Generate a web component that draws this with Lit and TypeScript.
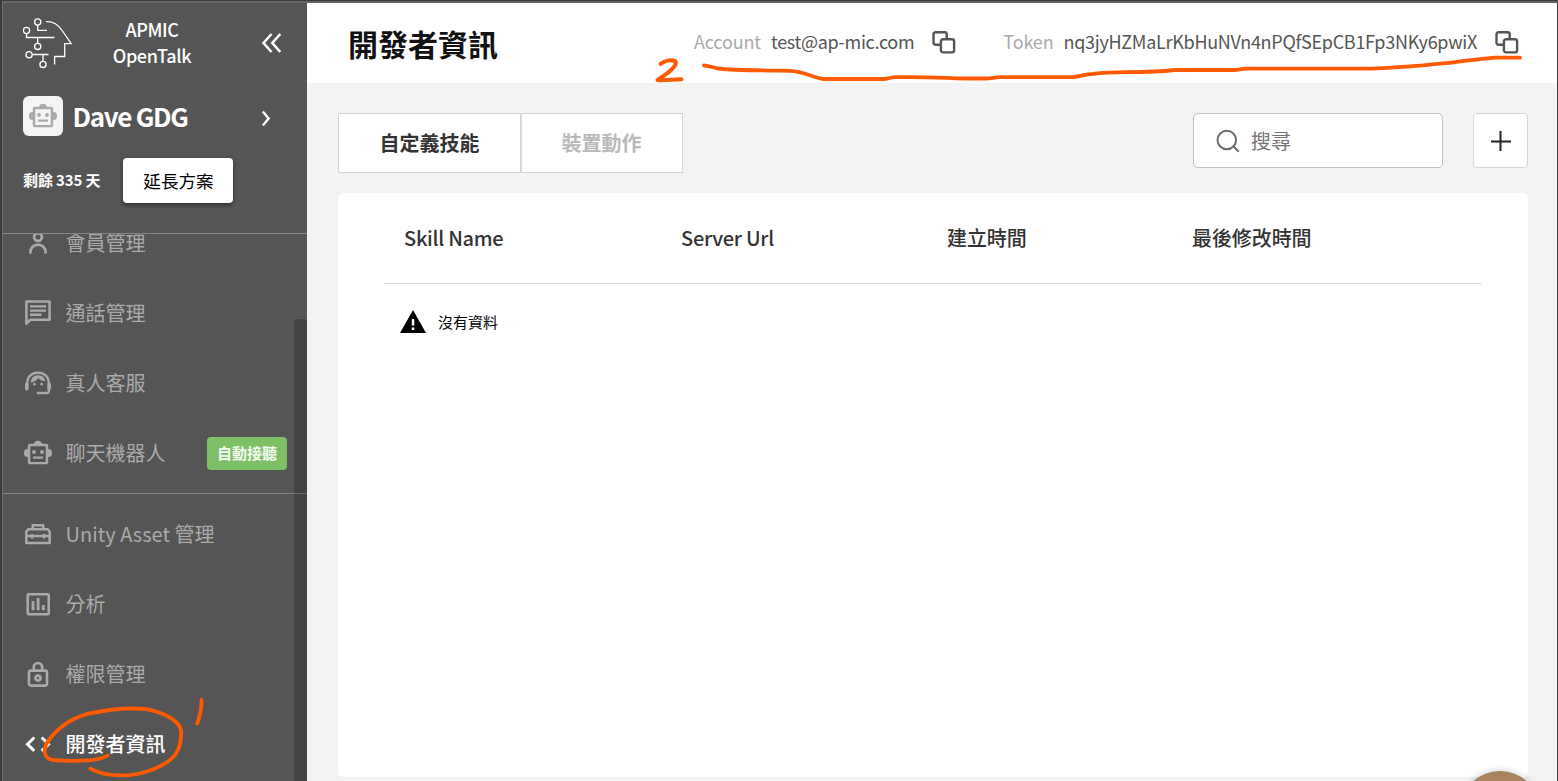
import { LitElement, html, css, svg } from "lit";
import { customElement, property } from "lit/decorators.js";

const robot = svg`<path fill-rule="evenodd" d="M14 .7a4 4 0 0 1 4 3h4.200a2 2 0 0 1 2 2v3.400a4 4 0 0 1 0 8v5.200a2 2 0 0 1-2 2H5.800a2 2 0 0 1-2-2v-5.200a4 4 0 0 1 0-8V5.700a2 2 0 0 1 2-2H10a4 4 0 0 1 4-3zM6.300 6.200v15.700h15.400V6.200z"/><circle cx="10" cy="12" r="1.900"/><circle cx="18" cy="12" r="1.900"/><path d="M9 16.500h10v2.200H9z"/>`;

const icons: Record<string, unknown> = {
  member: svg`<g fill="none" stroke="currentColor" stroke-width="2.700" stroke-linecap="round"><circle cx="14" cy="7" r="3.900"/><path d="M6.400 22.600v-.4a7.600 7.600 0 0 1 15.200 0v.4"/></g>`,
  chat: svg`<path fill="none" stroke="currentColor" stroke-width="2.500" stroke-linejoin="round" d="M2.400 1.500h23.200v18.200H6.400l-4 4z"/><path d="M6 5.200h16v2.300H6zM6 9.400h16v2.300H6zM6 13.600h11.500v2.300H6z"/>`,
  agent: svg`<path fill="none" stroke="currentColor" stroke-width="2.300" stroke-linecap="round" d="M3.200 13.500C3.200 6.500 8 2.600 14 2.600s10.800 3.900 10.800 10.900v7.500a2 2 0 0 1-2 2h-9"/><rect x="1" y="12.500" width="3.600" height="8" rx="1.700"/><rect x="23.400" y="12.500" width="3.600" height="8" rx="1.700"/><path d="M6.700 12.600C7 8 9.800 5.300 14 5.300c3.900 0 6.800 2.300 7.400 5.800-3 0-5.700-1-7.200-3.100-1.500 2.500-4.200 4.200-7.500 4.600z"/><circle cx="10.400" cy="14.200" r="1.400"/><circle cx="17.700" cy="14.200" r="1.400"/>`,
  robot,
  toolbox: svg`<g fill="none" stroke="currentColor" stroke-width="2.500" stroke-linejoin="round"><path d="M2.300 15v7h23.400v-7M2.300 15v-4.500l2.200-2.300h19l2.200 2.300V15z"/><path d="M8.700 8V4.200h10.600V8M8 13v4.500M20 13v4.500"/></g>`,
  chart: svg`<rect x="3.700" y="3.200" width="21" height="20" rx="1" fill="none" stroke="currentColor" stroke-width="2.500"/><path d="M7.600 10h2.800v9.200H7.600zM12.700 7h2.800v12.200h-2.800zM17.900 14h2.800v5.200h-2.800z"/>`,
  lock: svg`<g fill="none" stroke="currentColor" stroke-width="2.600"><rect x="5" y="9.600" width="18" height="15" rx="2"/><path d="M9.800 9.500V6.200a4.200 4.200 0 0 1 8.400 0v3.300"/><circle cx="14" cy="17.100" r="2.500"/></g>`,
  code: svg`<path fill="none" stroke="currentColor" stroke-width="3" d="M10.300 6.500L3.500 13.200l6.800 6.700M17.700 6.500l6.800 6.700-6.800 6.700"/>`,
};

const copyIcon = html`<svg class="copy" width="26" height="26" viewBox="0 0 26 26" fill="none" stroke="#555" stroke-width="2.400"><path d="M9.200 14.800H4.500a2 2 0 0 1-2-2V4.300a2 2 0 0 1 2-2h9.200a2 2 0 0 1 2 2v4.200"/><rect x="9.900" y="9.200" width="13.200" height="13.200" rx="2.200"/></svg>`;

@customElement("nav-item")
class NavItem extends LitElement {
  @property() icon = "";
  @property() label = "";
  @property() badge = "";
  @property({ type: Boolean, reflect: true }) active = false;
  static styles = css`
    :host { display: flex; align-items: center; height: 70px; flex: none; padding: 0 20px 0 21px; color: #aaa; font-size: 20px; line-height: 30px; box-sizing: border-box; }
    :host([active]) { color: #fff; font-weight: 500; }
    svg { width: 28px; height: 28px; fill: currentColor; margin: 2px 13.600px 0 0; flex: none; }
    .label { flex: 1; white-space: nowrap; }
    .badge { width: 80px; height: 33px; line-height: 32px; border-radius: 4px; background: #7dc066; color: #f4fbf1; text-align: center; font-size: 15px; font-weight: 700; }
  `;
  render() {
    return html`<svg viewBox="0 0 28 28">${icons[this.icon]}</svg><span class="label">${this.label}</span>${this.badge ? html`<span class="badge">${this.badge}</span>` : ""}`;
  }
}

@customElement("side-bar")
class SideBar extends LitElement {
  static styles = css`
    :host { display: flex; flex-direction: column; width: 304px; flex: none; background: #555; color: #fff; overflow: hidden; }
    .head { height: 231px; flex: none; box-sizing: border-box; border-bottom: 1px solid #858585; padding: 13px 20px 0; }
    .brand { display: flex; height: 54px; align-items: center; }
    .brand .name { flex: 1; text-align: center; font-size: 18px; font-weight: 500; line-height: 26px; letter-spacing: -0.350px; padding: 0 30px 2px 0; }
    .brand .fold { margin-right: 4px; }
    .logo { flex: none; }
    .bot { display: flex; align-items: center; margin-top: 26px; height: 40px; }
    .avatar { display: flex; align-items: center; justify-content: center; width: 40px; height: 40px; border-radius: 6px; background: #f4f4f4; }
    .avatar svg { fill: #aaa; margin-top: 1px; }
    .bot .name { flex: 1; margin-left: 9.500px; font-size: 26px; font-weight: 700; line-height: 40px; letter-spacing: -1.300px; }
    .plan { display: flex; align-items: center; margin-top: 22px; height: 45px; font-size: 15px; font-weight: 700; }
    .days { width: 77px; letter-spacing: -0.120px; white-space: nowrap; margin-top: -2px; }
    .extend { margin-left: 23px; width: 110px; height: 45px; border-radius: 4px; border: 0; padding: 0 0 0 1px; background: #fff; color: #000; font: inherit; font-weight: 400; font-size: 17.600px; box-shadow: 0 2px 4px rgba(0,0,0,.45); }
    .menu { position: relative; flex: 1; min-height: 0; overflow: hidden; }
    .list { display: flex; flex-direction: column; margin-top: -26px; }
    .line { height: 1px; background: #858585; margin: 5px 0; flex: none; }
    .thumb { position: absolute; right: 0; top: 85px; bottom: 0; width: 13px; background: #444; border-radius: 3px 3px 0 0; }
    .thumbline { position: absolute; right: 0; top: 259px; width: 13px; height: 1px; background: #6c6c6c; }
  `;
  render() {
    return html`
      <div class="head">
        <div class="brand">
          <svg class="logo" width="50" height="52" viewBox="23 17 50 52" fill="none" stroke="#fff" stroke-width="1.300">
            <circle cx="37.700" cy="22" r="3.100"/><circle cx="26.500" cy="30.500" r="3.100"/><circle cx="37.700" cy="46.400" r="3.100"/><circle cx="29.100" cy="54.700" r="3.100"/><circle cx="43" cy="64.400" r="3.100"/>
            <path d="M37.700 25v5.400H47M26.500 33.600v3.900h28M37.700 37.500v5.800M32.200 54.500h16.300M43 54.500v6.800M46 21.600c7.500-.5 12.500 3 16.500 9.400l8.700 12.700h-6.500v12.800H54.600v8"/>
          </svg>
          <div class="name">APMIC<br>OpenTalk</div>
          <svg class="fold" width="22" height="22" viewBox="0 0 22 22" fill="none" stroke="#fff" stroke-width="2.600"><path d="M10.500 2L2.500 11l8 9M19.300 2l-8 9 8 9"/></svg>
        </div>
        <div class="bot">
          <div class="avatar"><svg width="28" height="28" viewBox="0 0 28 28">${robot}</svg></div>
          <div class="name">Dave GDG</div>
          <svg width="26" height="20" viewBox="0 0 26 20" fill="none" stroke="#fff" stroke-width="2.400"><path d="M1.800 5.500l5.800 7-5.800 7"/></svg>
        </div>
        <div class="plan"><span class="days">剩餘 335 天</span><button class="extend">延長方案</button></div>
      </div>
      <div class="menu">
        <div class="list">
          <nav-item icon="member" label="會員管理"></nav-item>
          <nav-item icon="chat" label="通話管理"></nav-item>
          <nav-item icon="agent" label="真人客服"></nav-item>
          <nav-item icon="robot" label="聊天機器人" badge="自動接聽"></nav-item>
          <div class="line"></div>
          <nav-item icon="toolbox" label="Unity Asset 管理"></nav-item>
          <nav-item icon="chart" label="分析"></nav-item>
          <nav-item icon="lock" label="權限管理"></nav-item>
          <nav-item icon="code" label="開發者資訊" active></nav-item>
        </div>
        <div class="thumb"></div><div class="thumbline"></div>
      </div>`;
  }
}

@customElement("app-root")
class AppRoot extends LitElement {
  static styles = css`
    :host { position: relative; display: flex; width: 1558px; height: 781px; box-sizing: border-box; overflow: hidden; border-top: 1px solid #3b3b3b; border-left: 2px solid #3b3b3b; border-right: 1px solid #444; font-family: "Noto Sans CJK TC", "Noto Sans CJK SC", sans-serif; }
    .window { display: flex; flex: 1; border-top: 2px solid #666; border-left: 1px solid #6e6e6e; min-width: 0; }
    main { flex: 1; min-width: 0; display: flex; flex-direction: column; background: #f3f3f3; }
    header { height: 80px; flex: none; background: #fff; display: flex; align-items: center; padding: 0 37px 0 41px; box-sizing: border-box; }
    h1 { margin: 0; flex: 1; font-size: 30px; font-weight: 700; line-height: 44px; color: #111; padding-bottom: 1px; }
    .info { display: flex; align-items: center; font-size: 18px; line-height: 26px; color: #555; white-space: nowrap; }
    .info span { padding-bottom: 4px; }
    .info .key { color: #aaa; margin-right: 10px; letter-spacing: -0.150px; }
    .info .value { letter-spacing: -0.290px; }
    .info .mail { letter-spacing: -0.300px; }
    .info .copy { margin-left: 17px; flex: none; }
    .info + .info { margin-left: 46px; }
    .tools { display: flex; height: 60px; margin: 30px 29px 0 31px; flex: none; }
    .tab { box-sizing: border-box; height: 60px; border: 1px solid #d5d5d5; background: #fff; text-align: center; font-size: 20px; font-weight: 700; line-height: 58px; color: #333; width: 183px; }
    .tab.off { width: 162px; color: #b9b9b9; border-left-color: #ddd; padding-right: 1px; }
    .space { flex: 1; }
    .search { box-sizing: border-box; width: 250px; height: 55px; border: 1px solid #c1c1c1; border-radius: 5px; background: #fff; display: flex; align-items: center; padding-left: 21px; color: #757575; font-size: 20px; line-height: 30px; }
    .search svg { margin-right: 10px; }
    .add { box-sizing: border-box; width: 55px; height: 55px; margin-left: 30px; border: 1px solid #d5d5d5; border-radius: 4px; background: #fff; display: flex; align-items: center; justify-content: center; }
    .card { margin: 20px 29px 4px 31px; flex: 1; background: #fff; border-radius: 5px; padding: 0 46px; }
    .row { display: grid; grid-template-columns: 277px 266px 245px 1fr; height: 90px; line-height: 90px; border-bottom: 1px solid #ddd; padding-left: 20px; font-size: 20px; font-weight: 500; color: #333; }
    .latin { letter-spacing: -0.280px; }
    .cjk { letter-spacing: -0.080px; }
    .empty { display: flex; align-items: center; height: 76px; padding-left: 16px; font-size: 15px; color: #000; }
    .empty svg { margin-right: 12px; }
    .empty span { padding-bottom: 2px; }
    .fab { position: absolute; left: 1458px; top: 770px; width: 80px; height: 80px; border-radius: 50%; background: #a9835e; box-shadow: 0 0 9px rgba(0,0,0,.2); }
    .ink { position: absolute; left: -2px; top: -1px; pointer-events: none; }
  `;
  render() {
    return html`
      <div class="window">
        <side-bar></side-bar>
        <main>
          <header>
            <h1>開發者資訊</h1>
            <div class="info"><span class="key">Account</span><span class="mail">test@ap-mic.com</span>${copyIcon}</div>
            <div class="info"><span class="key">Token</span><span class="value">nq3jyHZMaLrKbHuNVn4nPQfSEpCB1Fp3NKy6pwiX</span>${copyIcon}</div>
          </header>
          <div class="tools">
            <div class="tab">自定義技能</div><div class="tab off">裝置動作</div>
            <div class="space"></div>
            <div class="search"><svg width="26" height="26" viewBox="0 0 26 26" fill="none" stroke="#6b6b6b" stroke-width="2"><circle cx="11.800" cy="12" r="9.300"/><path d="M18.500 18.500l5.300 5.300"/></svg>搜尋</div>
            <div class="add"><svg width="20" height="20" viewBox="0 0 20 20" stroke="#222" stroke-width="2"><path d="M0 10.500h20M9.500 0v20"/></svg></div>
          </div>
          <section class="card">
            <div class="row"><span class="latin">Skill Name</span><span class="latin">Server Url</span><span class="cjk">建立時間</span><span class="cjk">最後修改時間</span></div>
            <div class="empty"><svg width="26" height="24" viewBox="0 0 26 24"><path d="M13 0l13 23H0z"/><path fill="#fff" d="M11.800 9h2.500v6.500h-2.500zM11.800 17.500h2.500V20h-2.500z"/></svg><span>沒有資料</span></div>
          </section>
        </main>
      </div>
      <div class="fab"></div>
      <svg class="ink" width="1558" height="781" viewBox="0 0 1558 781" fill="none" stroke="#ff5a00" stroke-width="3.800" stroke-linecap="round" stroke-linejoin="round">
        <path d="M704 65.500c6 .5 9 2 14 3 17 2 50 2 72 2.300 15 .5 22 7 34 8.200h60c6-.5 6-1.700 12-1.900 38-.5 50 1.200 68 1.400h22c6-.2 8-1.300 14-1.400h73c8-.4 12-3 20-3.300 25-3 50 0 81-3.800h61c8-.7 5-1.300 12-1.400h126c20-1.300 34-2 47-3 10-1 18-2.200 30-2.700 15-2.200 30-4 45-5.200h25"/>
        <path d="M660.500 64c4-3.500 10-4.500 14.500-3 4 4-8 13-17.500 19 8 .8 14-.8 24-.8" stroke-width="4"/>
        <path d="M201.500 700c.2 9-1.500 16-4.300 23.500"/>
        <path d="M107.500 755.500c-6 4-16 5-26 5.200-12 .3-22 .5-30-1-8-2-9-11-3-19 10-14 25-23 40-27 18-4 36-6.500 58-4.600 15 3 32 10 34.500 21 1 14-3 23-10 29-11 9-25 14-41 16-14 1-28 0-39.500-6.500"/>
      </svg>`;
  }
}
